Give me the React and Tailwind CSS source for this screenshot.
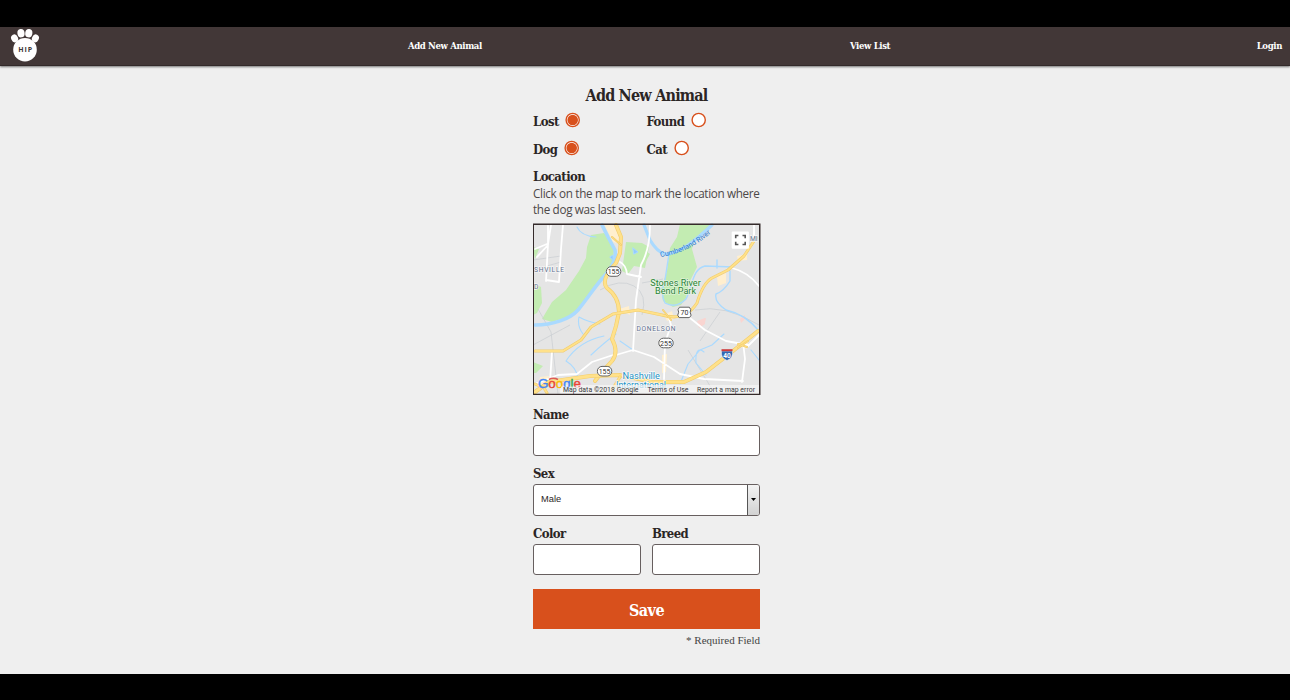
import React from "react";

const SLAB = "font-['DejaVu_Serif_Condensed','DejaVu_Serif',serif] font-bold whitespace-nowrap";

function Paw() {
  return (
    <svg className="mb-[2px] block h-[34px] w-[30px]" viewBox="0 0 30 34" fill="#fff">
      <ellipse cx="4.6" cy="10.4" rx="3.4" ry="4" transform="rotate(-25 4.6 10.4)" />
      <ellipse cx="11" cy="5.2" rx="3.6" ry="4.2" transform="rotate(-8 11 5.2)" />
      <ellipse cx="18.8" cy="5.2" rx="3.6" ry="4.2" transform="rotate(8 18.8 5.2)" />
      <ellipse cx="25.4" cy="10.4" rx="3.4" ry="4" transform="rotate(25 25.4 10.4)" />
      <circle cx="15" cy="21.7" r="11.8" />
      <text x="8.3" y="24.4" textLength="13.6" fontSize="7" fontWeight="bold" fill="#423737" fontFamily="Open Sans, sans-serif">HIP</text>
    </svg>
  );
}

function Radio({ label, checked }) {
  return (
    <label className="flex h-[27.5px] items-start">
      <span className={`${SLAB} mt-[5px] text-[13px] leading-[18px] tracking-[-0.55px]`}>{label}</span>
      <svg className="mt-[4px] ml-[6.5px] block size-4" viewBox="0 0 16 16">
        <circle cx="7.7" cy="8" r="6.6" fill="#fff" stroke="#d8501c" strokeWidth="1.4" />
        {checked && <circle cx="7.7" cy="8" r="5.3" fill="#d8501c" />}
      </svg>
    </label>
  );
}

function Road({ d, w = 3 }) {
  return (
    <g fill="none" strokeLinecap="round" strokeLinejoin="round">
      <path d={d} stroke="#f2cd6d" strokeWidth={w} />
      <path d={d} stroke="#ffe18a" strokeWidth={w - 1.2} />
    </g>
  );
}

function Shield({ x, y, label }) {
  return (
    <g>
      <rect x={x - 7.2} y={y - 4.8} width="14.4" height="9.6" rx="4.6" fill="#fff" stroke="#626262" strokeWidth="1" />
      <text x={x} y={y + 2.5} textAnchor="middle" fontSize="7" fill="#333">{label}</text>
    </g>
  );
}

function MapView() {
  return (
    <svg className="block h-[172px] w-[228px]" viewBox="533 223 228 172" fontFamily="Roboto, sans-serif">
      <rect x="533" y="223.5" width="227" height="171.5" fill="#e5e5e5" />
      <g fill="#c3ecb2">
        <path d="M591 235 604 233 611 241 614 250 613 262 603 276 590 294 580 309 568 317 552 322 542 319 552 302 566 290 579 271 586 258 587 247Z" />
        <path d="M626 242 642 243 649 247 645 268 634 266 628 274 622 271Z" />
        <path d="M680 224 711 224 694 240 692 249 697 267 689 283 686 298 681 305 673 307 663 301 661 289 667 271 670 248 677 237Z" />
        <path d="M533 283 541 287 542 303 537 313 533 315Z" />
        <path d="M533 362 543 366 536 373 533 373Z M533 247 539 249 535 259Z" />
        <path d="M643 249 650 254 644 265Z" />
      </g>
      <g fill="#ffefcf">
        <path d="M604 224 616 224 620 244 613 242Z M717 277 726 273 726 283 718 286Z M737 256 747 254 747 260 738 261Z M664 315 672 311 674 319 667 321Z M740 340 748 342 747 349 741 347Z M619 309 629 306 630 315Z M662 355 667 354 666 372 662 373Z M540 377 549 376 547 387 538 387Z" />
      </g>
      <path d="M740 319l5-4 0 4-4 4z M697 321l8-3 0 6-6 4z M702 319l4-1-1 5z" fill="#f9d5d1" />
      <g fill="none" stroke="#c9cdd1" strokeWidth="0.7">
        <path d="M533 260 561 256M533 270 561 262M538 309 551 332 558 394M533 345 570 325M600 290Q620 278 634 286T642 315M642 283 663 279M695 310Q725 304 759 325M700 341 720 312M688 350 715 394" />
      </g>
      <g fill="none" stroke="#aadaff" strokeLinecap="round" strokeLinejoin="round">
        <path d="M602 225 608 237 615 250Q617 261 606 274C596 285 587 299 578 310C570 319 553 325 535 325" strokeWidth="3.6" />
        <path d="M644 225 650 240Q657 252 665 254C680 254 697 239 712 225" strokeWidth="3.2" />
        <path d="M669 254 665 280Q660 294 665 303Q676 309 686 299C693 286 692 269 705 266L733 267M717 268 717 260M730 271 730 281Q724 291 716 294Q714 302 726 310Q745 314 759 331" strokeWidth="1.4" />
        <path d="M577 227Q581 236 596 237M600 324Q588 322 579 317Q577 326 583 334M604 336Q579 341 566 361Q576 367 578 378M616 334Q606 341 591 355M620 341 633 350M751 350 759 360M704 352Q695 345 696 363L706 375M724 334 712 345 700 350 688 364 680 384" strokeWidth="1.1" />
        <path d="M633 248l5 4-4 2z M610 257l3-2v5z" fill="#92cbff" />
      </g>
      <g fill="none" stroke="#fff" strokeWidth="1.8" strokeLinecap="round" strokeLinejoin="round">
        <path d="M551 225 548 244 546 281M563 225 561 249 559 282 546 280M535 249 547 244M548 226 548 245 537 257M620 262Q626 265 627 274L641 277M650 225Q650 249 641 265L636 300 633 351M754 225 754 239M732 268Q748 272 759 286M685 314 705 330 726 341 748 345M743 342 745 359 742 382M552 351 550 382M535 384 558 375 577 374 592 362 613 355M633 350 616 355M633 350 654 357 680 374 704 379 743 381M668 315 671 325 665 343 664 379M748 346 759 335" />
      </g>
      <Road d="M616 225 621 237 620 253 616 263Q600 280 607 288Q619 297 619 312L616 326 612 339Q619 352 612 361L602 372 595 381" w={4} />
      <Road d="M535 351 563 351 581 340 591 327 613 314 638 310 662 315Q685 322 697 303Q703 283 712 278L728 270 744 256 756 238" />
      <Road d="M535 392 549 382 590 376 619 375 653 382 684 382 706 372 733 351 758 331" w={4} />
      <Road d="M620 377 612 390M535 384 544 388 547 393" w={3} />
      <Road d="M738 348 748 341M738 344 747 347M663 310 671 320M612 237 621 245" w={2} />

      <g fontSize="6.7" fill="#637190" stroke="#f5f5f5" strokeWidth="1.4" paintOrder="stroke">
        <text x="534" y="272.4" textLength="30">SHVILLE</text>
        <text x="534" y="289.2">D</text>
        <text x="750" y="241">MI</text>
        <text x="636.5" y="330.8" textLength="39">DONELSON</text>
      </g>
      <path id="riverLabel" d="M660.5 257C680 254 695 247 711 233" fill="none" />
      <text fontSize="7.2" fill="#2f7bd0"><textPath href="#riverLabel">Cumberland River</textPath></text>
      <g fontSize="8.4" fill="#298238" stroke="#e9f6e4" strokeWidth="1.2" paintOrder="stroke">
        <text x="650.3" y="285.7" textLength="50.5" lengthAdjust="spacingAndGlyphs">Stones River</text>
        <text x="655" y="294.2" textLength="41" lengthAdjust="spacingAndGlyphs">Bend Park</text>
      </g>
      <g fontSize="8.4" fill="#1a91c5" stroke="#fff" strokeWidth="1.2" paintOrder="stroke">
        <text x="622.5" y="379" textLength="37.5" lengthAdjust="spacingAndGlyphs">Nashville</text>
        <text x="616" y="388.2" textLength="50" lengthAdjust="spacingAndGlyphs">International</text>
      </g>
      <Shield x={613.6} y={271.5} label="155" />
      <Shield x={604.6} y={371.2} label="155" />
      <Shield x={666} y={343} label="255" />
      <path d="M679.5 307.2h9.8l1.5 2.5-.7 2.5 1 3-1.5 2.4h-10.4l-1.5-2.4 1-3-.7-2.5z" fill="#fff" stroke="#626262" />
      <text x="684.5" y="315" textAnchor="middle" fontSize="7" fill="#333">70</text>
      <path d="M721.5 351h11q1 7-5.5 9.5-6.5-2.5-5.5-9.5Z" fill="#3169b4" stroke="#fff" strokeWidth=".5" />
      <path d="M721.5 349.2h11v2h-11z" fill="#ce3b3b" />
      <text x="727" y="357.7" textAnchor="middle" fontSize="6.5" fontWeight="bold" fill="#fff">40</text>

      <path d="M560 385H759V394H560Z" fill="#f5f5f5" fillOpacity=".72" />
      <text x="538" y="388.4" textLength="43" lengthAdjust="spacingAndGlyphs" fontFamily="Liberation Sans, sans-serif" fontSize="13" strokeWidth=".4">
        <tspan fill="#4285f4" stroke="#4285f4">G</tspan><tspan fill="#ea4335" stroke="#ea4335">o</tspan><tspan fill="#fbbc05" stroke="#fbbc05">o</tspan><tspan fill="#4285f4" stroke="#4285f4">g</tspan><tspan fill="#34a853" stroke="#34a853">l</tspan><tspan fill="#ea4335" stroke="#ea4335">e</tspan>
      </text>
      <path d="M549 379.5q4-2.5 9 0" fill="none" stroke="#dd5b55" strokeWidth="1.5" />
      <path d="M561 386.6H582V394H561Z" fill="#f5f5f5" fillOpacity=".8" />
      <g fontSize="6.9" fill="#3c3c3c">
        <text x="563" y="391.7" textLength="75.5">Map data ©2018 Google</text>
        <text x="647.5" y="391.7" textLength="41">Terms of Use</text>
        <text x="697" y="391.7" textLength="58">Report a map error</text>
      </g>
      <rect x="731.7" y="231.5" width="17.2" height="17.2" rx="1" fill="#fff" />
      <path d="M735.7 238.2v-2.7h2.7M742.5 235.5h2.7v2.7M735.7 241.8v2.7h2.7M742.5 244.5h2.7v-2.7" fill="none" stroke="#555" strokeWidth="1.6" />
      <rect x="533.25" y="224.25" width="226.5" height="170.25" fill="none" stroke="#352b2b" strokeWidth="1.5" />
    </svg>
  );
}

function Field({ label, children }) {
  return (
    <div className="min-w-0 flex-1">
      <div className={`${SLAB} h-[19px] text-[13px] leading-[18px] tracking-[-0.6px]`}>{label}</div>
      {children}
    </div>
  );
}

const BOX = "block w-full rounded-[3px] border border-[#675f5f] bg-white outline-none";

export default function App() {
  return (
    <div className="flex h-[700px] w-[1290px] flex-col overflow-hidden bg-black pt-[27px] pb-[26px] text-[#2b2525]">
      <header className={`${SLAB} z-10 flex h-[39px] shrink-0 items-center justify-between border-b border-[#332a2a] bg-[#423737] pr-[8px] pl-[10px] text-[9.5px] tracking-[-0.37px] text-white shadow-[0_1px_2px_rgba(0,0,0,0.5)]`}>
        <div className="w-[398px]"><Paw /></div>
        <a className="w-[442px]">Add New Animal</a>
        <a className="flex-1">View List</a>
        <a>Login</a>
      </header>
      <main className="min-h-0 flex-1 bg-[#efefef] pt-[19px] pl-[533px]">
        <form className="w-[227px]">
          <h1 className={`${SLAB} h-[23px] text-center text-[16px] leading-[22px] tracking-[-0.8px]`}>Add New Animal</h1>
          <div className="grid grid-cols-2">
            <Radio label="Lost" checked />
            <Radio label="Found" />
            <Radio label="Dog" checked />
            <Radio label="Cat" />
          </div>
          <h2 className={`${SLAB} mt-[4.5px] h-[18px] text-[13px] leading-[18px] tracking-[-0.6px]`}>Location</h2>
          <p className="-mt-[1px] h-[38px] font-['Open_Sans',sans-serif] text-[11.7px] leading-[16.5px] tracking-[-0.33px] whitespace-nowrap text-[#4d4848]">
            Click on the map to mark the location where<br />the dog was last seen.
          </p>
          <MapView />
          <div className="mt-[11px] flex h-[59px]">
            <Field label="Name"><input className={`${BOX} h-[31px]`} /></Field>
          </div>
          <div className="flex h-[60px]">
            <Field label="Sex">
              <div className={`${BOX} flex h-[32px] items-center overflow-hidden pl-[7px]`}>
                <span className="flex-1 font-['Liberation_Sans',sans-serif] text-[9.3px] font-normal">Male</span>
                <span className="flex h-full w-[12px] items-center justify-center border-l border-[#555] bg-linear-to-b from-[#f3f3f3] to-[#d2d2d2]">
                  <svg className="h-[3px] w-[5px]" viewBox="0 0 5 3"><path d="M0 0H5L2.5 3Z" /></svg>
                </span>
              </div>
            </Field>
          </div>
          <div className="flex h-[64px] gap-[11px]">
            <Field label="Color"><input className={`${BOX} h-[31px]`} /></Field>
            <Field label="Breed"><input className={`${BOX} h-[31px]`} /></Field>
          </div>
          <button type="button" className={`${SLAB} block h-[40px] w-full bg-[#d8501c] pt-[4px] text-[16px] tracking-[-0.5px] text-white`}>Save</button>
          <p className="mt-[4px] text-right font-['Liberation_Serif',serif] text-[11px] leading-[15px] text-[#444]">* Required Field</p>
        </form>
      </main>
    </div>
  );
}
